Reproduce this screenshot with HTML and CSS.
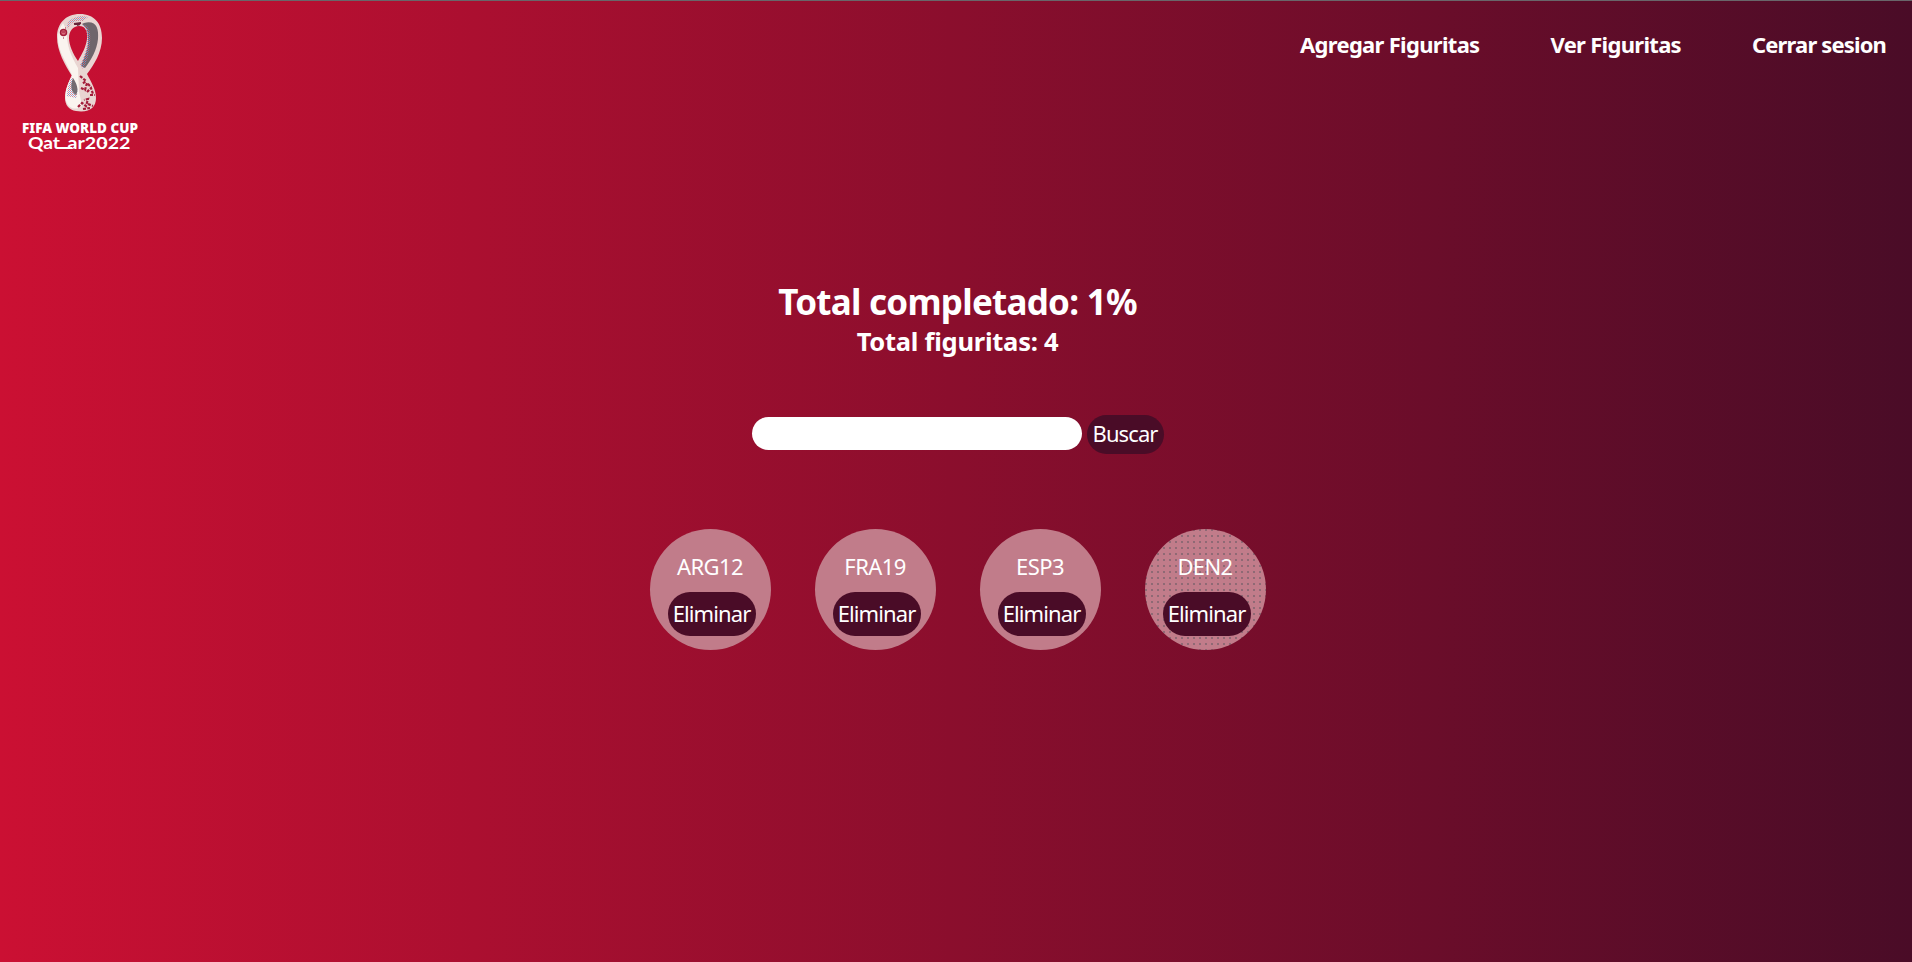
FILE: index.html
```html
<!DOCTYPE html>
<html lang="es">
<head>
<meta charset="utf-8">
<title>Figuritas</title>
<link rel="stylesheet" href="styles.css">
</head>
<body>
<header class="header">
  <svg class="logo" width="160" height="160" viewBox="0 0 160 160" role="img" aria-label="FIFA World Cup Qatar 2022">
    <defs>
      <pattern id="grain" width="2" height="2" patternUnits="userSpaceOnUse"><rect width="1" height="1" fill="#c86b80"/><rect x="1" y="1" width="1" height="1" fill="#7f91cf"/></pattern>
    </defs>
    <path fill="#e9d5d2" fill-rule="evenodd" d="M80 14C65 14 57 24 57 37C57 51 65 65 72 76C68 83 65 90 65 98C65 105 69 110 76 111C90 113 96 107 96 98C96 89 91 82 87 74C94 65 102 52 102 38C102 23 94 14 80 14ZM79 26C86 26 88 32 87 39C86 47 82 54 78 61C73 54 69 45 69 38C69 31 73 26 79 26Z"/>
    <path fill="#faf4ef" d="M63 23C56 33 57 43 62 55L72 75C68 83 64 93 66 101C69 110 77 110 82 106L79 91L78 68C71 56 66 44 67 31Z"/>
    <path fill="#6f666c" d="M84 23C96 20 99 28 98 39C97 50 91 60 85 68L81 66C85 56 89 47 88 38C88 31 87 27 82 24Z"/>
    <path fill="url(#grain)" opacity=".8" d="M82 24C90 26 91 34 90 43C89 53 87 62 83 69L80 65C87 53 91 34 82 24ZM67 25C70 17 81 15 88 17L83 21C74 20 70 23 68 29ZM72 77C77 84 79 91 76 98L67 96C67 89 69 82 72 77Z"/>
    <path fill="#736b71" d="M73 78C77 84 79 90 76 95C71 92 70 86 73 78Z"/>
    <path fill="none" stroke="#682338" stroke-width="2" d="M74 24L81 23M77 25L80 24"/>
    <circle cx="63.500" cy="32.500" r="3" fill="#d9687a" stroke="#a31d3a" stroke-width="1.500"/>
    <path fill="none" stroke="#a31d3a" d="M62 32h3M63 38h1M65 28h1"/>
    <path fill="none" stroke="#a31d3a" stroke-width="2.200" stroke-dasharray="3 1.300" d="M80 76L86 81L82 84M81 88L85 90L87 83L90 86M87 92L91 88L93 94M90 95L95 95M78 107L82 103L86 106L88 99L84 100M83 109L90 108M88 104L93 106"/>
    <text class="logo-name" x="22" y="133" textLength="116" lengthAdjust="spacingAndGlyphs">FIFA WORLD CUP</text>
    <text class="logo-place" x="28" y="149" textLength="32" lengthAdjust="spacingAndGlyphs">Qat</text>
    <path stroke="#fff" stroke-width="2" d="M57 148H72"/>
    <text class="logo-place" x="67.500" y="149" textLength="63" lengthAdjust="spacingAndGlyphs">ar2022</text>
    <circle cx="104.500" cy="143" r="1.100" fill="#fff"/>
  </svg>
  <nav class="nav">
    <a class="nav-link">Agregar Figuritas</a>
    <a class="nav-link">Ver Figuritas</a>
    <a class="nav-link nav-exit">Cerrar sesion</a>
  </nav>
</header>
<main class="main">
  <h1 class="title">Total completado: 1%</h1>
  <h2 class="subtitle">Total figuritas: 4</h2>
  <form class="search">
    <input class="search-input" type="text" aria-label="Buscar figurita">
    <button class="button search-button" type="button">Buscar</button>
  </form>
  <section class="stickers">
    <article class="sticker"><span class="code">ARG12</span><button class="button remove">Eliminar</button></article>
    <article class="sticker"><span class="code">FRA19</span><button class="button remove">Eliminar</button></article>
    <article class="sticker"><span class="code">ESP3</span><button class="button remove">Eliminar</button></article>
    <article class="sticker sticker-dotted"><span class="code">DEN2</span><button class="button remove">Eliminar</button></article>
  </section>
</main>
</body>
</html>
```
FILE: styles.css
```css
* { box-sizing: border-box; margin: 0; padding: 0; }
body {
  height: 962px;
  overflow: hidden;
  border-top: 1px solid #69666a;
  background: linear-gradient(to right, #cb1033, #4a0c27) border-box;
  color: #fff;
  font-family: "Segoe UI", "Noto Sans", sans-serif;
  font-size: 22px;
}
.header { display: flex; justify-content: space-between; height: 279px; }
.logo { display: block; margin-top: -1px; }
.logo-name { font: 900 13.500px "Noto Sans", sans-serif; fill: #fff; }
.logo-place { font: 700 17px Lato, sans-serif; fill: #fff; }
.nav { display: flex; gap: 71px; padding: 28px 26px 0 0; }
.nav-link { line-height: 30px; font-weight: 700; white-space: nowrap; letter-spacing: -.7px; }
.nav-exit { letter-spacing: -.85px; }
.main { display: flex; flex-direction: column; align-items: center; padding-left: 3px; }
.title { font-size: 35px; line-height: 44px; letter-spacing: -.75px; }
.subtitle { font-size: 25.500px; line-height: 35px; letter-spacing: -.25px; }
.search { display: flex; align-items: center; gap: 5px; margin-top: 56px; height: 39px; }
.search-input { width: 330px; height: 33px; border: 0; border-radius: 17px; background: #fff; margin-top: -2px; }
.button { border: 0; padding-bottom: 3px; background: #4a0c27; color: #fff; font: 22px "Segoe UI", "Noto Sans", sans-serif; letter-spacing: -.9px; text-align: center; }
.search-button { width: 77px; height: 39px; border-radius: 20px; }
.stickers { display: flex; gap: 44px; margin-top: 75px; }
.sticker { display: flex; flex-direction: column; align-items: center; width: 121px; height: 121px; padding-top: 22px; border-radius: 50%; background: #c17c8a; }
.sticker-dotted { background: radial-gradient(circle at 1px 1px, #8b6873 .7px, transparent .8px) 0 0 / 6px 6px, #c17c8a; }
.code { line-height: 30px; letter-spacing: -.6px; }
.remove { width: 88px; height: 44px; margin: 11px 0 0 3px; border-radius: 22px; }
```
